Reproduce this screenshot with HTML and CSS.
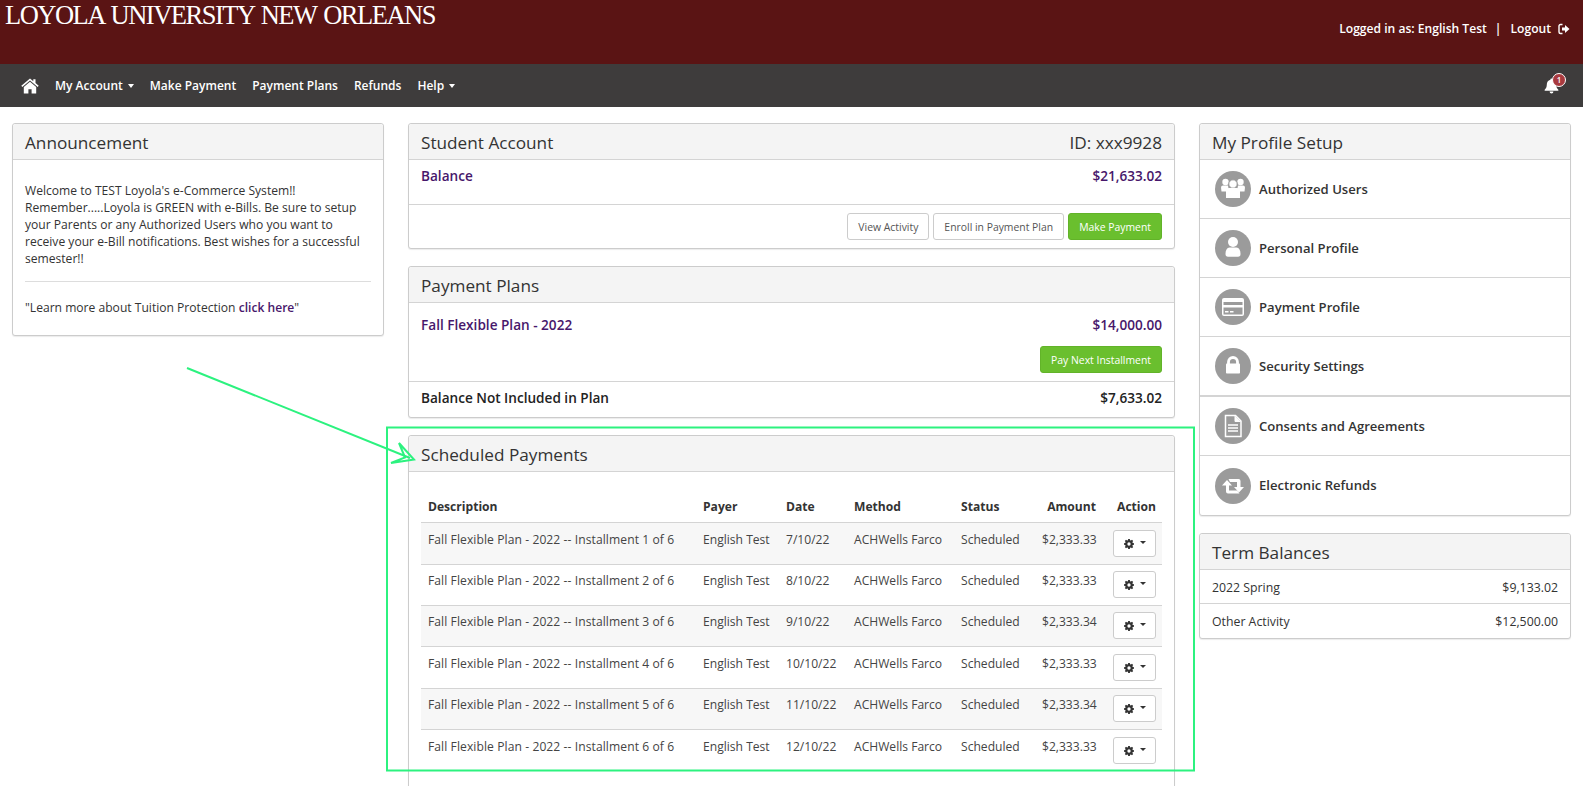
FILE: index.html
```html
<!DOCTYPE html>
<html lang="en">
<head>
    <meta charset="UTF-8">
    <meta name="viewport" content="width=device-width, initial-scale=1.0">
    <title>Loyola University New Orleans</title>
    <link rel="stylesheet" href="styles.css">
</head>
<body>

    <header class="top-bar">
        <div class="logo">LOYOLA UNIVERSITY NEW ORLEANS</div>
        <div class="user-info">
            <span>Logged in as: English Test</span>
            <span class="sep">|</span>
            <a href="#">Logout</a>
            <svg class="logout-icon" viewBox="0 0 12 12"><path d="M4.500 1.500H2.500A1.500 1.500 0 0 0 1 3v6a1.500 1.500 0 0 0 1.500 1.500h2" fill="none" stroke="#fff" stroke-width="1.400"/><path d="M4 4.500h3V2l4.500 4L7 10V7.500H4z" fill="#fff"/></svg>
        </div>
    </header>

    <nav class="nav-bar">
        <a href="#" class="home-link">
            <svg class="home-icon" viewBox="0 0 18 16"><path d="M9 0.500L0.300 7.800l1 1.200L9 2.600 16.700 9l1-1.200L14.500 5.100V1.200h-2.200v2L9 0.500z" fill="#fff"/><path d="M9 3.800L2.800 9v6.500h4.600v-4.300h3.200v4.300h4.600V9z" fill="#fff"/></svg>
        </a>
        <a href="#" class="caret">My Account</a>
        <a href="#">Make Payment</a>
        <a href="#">Payment Plans</a>
        <a href="#">Refunds</a>
        <a href="#" class="caret">Help</a>
        <div class="bell">
            <svg class="bell-icon" viewBox="0 0 16 18"><path d="M8 1.500a1.200 1.200 0 0 1 1.200 1.300C11.800 3.400 13 5.500 13 8c0 3 1 4.300 2.300 5.500v1H0.700v-1C2 12.300 3 11 3 8c0-2.500 1.200-4.600 3.800-5.200A1.200 1.200 0 0 1 8 1.500z" fill="#fff"/><path d="M6 15.500h4a2 2 0 0 1-4 0z" fill="#fff"/></svg>
            <span class="badge">1</span>
        </div>
    </nav>

    <main class="columns">
        <section class="col">
            <div class="card">
                <h2 class="card-title">Announcement</h2>
                <div class="announce">
                    <p>Welcome to TEST Loyola's e-Commerce System!! Remember.....Loyola is GREEN with e-Bills. Be sure to setup your Parents or any Authorized Users who you want to receive your e-Bill notifications. Best wishes for a successful semester!!</p>
                    <hr>
                    <p>"Learn more about Tuition Protection <a href="#">click here</a>"</p>
                </div>
            </div>
        </section>

        <section class="col">
            <div class="card">
                <h2 class="card-title split"><span>Student Account</span><span>ID: xxx9928</span></h2>
                <div class="row balance"><a href="#">Balance</a><a href="#">$21,633.02</a></div>
                <div class="actions">
                    <button class="btn">View Activity</button>
                    <button class="btn">Enroll in Payment Plan</button>
                    <button class="btn btn-green">Make Payment</button>
                </div>
            </div>

            <div class="card">
                <h2 class="card-title">Payment Plans</h2>
                <div class="plan">
                    <div class="row-plain"><a href="#">Fall Flexible Plan - 2022</a><a href="#">$14,000.00</a></div>
                    <div class="plan-action"><button class="btn btn-green">Pay Next Installment</button></div>
                </div>
                <div class="row not-included"><span>Balance Not Included in Plan</span><span>$7,633.02</span></div>
            </div>

            <div class="card card-tall">
                <h2 class="card-title">Scheduled Payments</h2>
                <div class="table-wrap">
                    <table class="pay-table">
                        <colgroup>
                            <col class="c-desc"><col class="c-payer"><col class="c-date"><col class="c-method"><col class="c-status"><col class="c-amount"><col class="c-action">
                        </colgroup>
                        <thead>
                            <tr><th>Description</th><th>Payer</th><th>Date</th><th>Method</th><th>Status</th><th class="num">Amount</th><th class="num act">Action</th></tr>
                        </thead>
                        <tbody>
                            <tr><td>Fall Flexible Plan - 2022 -- Installment 1 of 6</td><td>English Test</td><td>7/10/22</td><td>ACHWells Farco</td><td>Scheduled</td><td class="num">$2,333.33</td><td class="num act"><button class="gear-btn"><svg class="gear" viewBox="0 0 12 12"><use href="#gear-shape"/></svg><i class="gear-caret"></i></button></td></tr>
                            <tr class="short"><td>Fall Flexible Plan - 2022 -- Installment 2 of 6</td><td>English Test</td><td>8/10/22</td><td>ACHWells Farco</td><td>Scheduled</td><td class="num">$2,333.33</td><td class="num act"><button class="gear-btn"><svg class="gear" viewBox="0 0 12 12"><use href="#gear-shape"/></svg><i class="gear-caret"></i></button></td></tr>
                            <tr class="short"><td>Fall Flexible Plan - 2022 -- Installment 3 of 6</td><td>English Test</td><td>9/10/22</td><td>ACHWells Farco</td><td>Scheduled</td><td class="num">$2,333.34</td><td class="num act"><button class="gear-btn"><svg class="gear" viewBox="0 0 12 12"><use href="#gear-shape"/></svg><i class="gear-caret"></i></button></td></tr>
                            <tr><td>Fall Flexible Plan - 2022 -- Installment 4 of 6</td><td>English Test</td><td>10/10/22</td><td>ACHWells Farco</td><td>Scheduled</td><td class="num">$2,333.33</td><td class="num act"><button class="gear-btn"><svg class="gear" viewBox="0 0 12 12"><use href="#gear-shape"/></svg><i class="gear-caret"></i></button></td></tr>
                            <tr class="short"><td>Fall Flexible Plan - 2022 -- Installment 5 of 6</td><td>English Test</td><td>11/10/22</td><td>ACHWells Farco</td><td>Scheduled</td><td class="num">$2,333.34</td><td class="num act"><button class="gear-btn"><svg class="gear" viewBox="0 0 12 12"><use href="#gear-shape"/></svg><i class="gear-caret"></i></button></td></tr>
                            <tr><td>Fall Flexible Plan - 2022 -- Installment 6 of 6</td><td>English Test</td><td>12/10/22</td><td>ACHWells Farco</td><td>Scheduled</td><td class="num">$2,333.33</td><td class="num act"><button class="gear-btn"><svg class="gear" viewBox="0 0 12 12"><use href="#gear-shape"/></svg><i class="gear-caret"></i></button></td></tr>
                        </tbody>
                    </table>
                </div>
            </div>
        </section>

        <section class="col">
            <div class="card">
                <h2 class="card-title">My Profile Setup</h2>
                <a href="#" class="profile-row">
                    <svg class="circle-icon" viewBox="0 0 36 36"><circle cx="18" cy="18" r="18" fill="#9b9b9b"/><g fill="#fff"><circle cx="10.500" cy="11" r="3.200"/><circle cx="25.500" cy="11" r="3.200"/><path d="M6 16.500q0-2 2-2h5l1 6H6.500z"/><path d="M30 16.500q0-2-2-2h-5l-1 6h7.500z"/></g><circle cx="18" cy="13" r="4.200" fill="#fff" stroke="#9b9b9b"/><path d="M11 20q0-3 3-3h8q3 0 3 3v7H11z" fill="#fff"/></svg>
                    <span>Authorized Users</span>
                </a>
                <a href="#" class="profile-row">
                    <svg class="circle-icon" viewBox="0 0 36 36"><circle cx="18" cy="18" r="18" fill="#9b9b9b"/><circle cx="18" cy="12" r="5" fill="#fff"/><path d="M10.500 24q0-6 4-6.500h7q4 .500 4 6.500 0 2.700-2.500 2.700h-10Q10.500 26.700 10.500 24z" fill="#fff"/></svg>
                    <span>Personal Profile</span>
                </a>
                <a href="#" class="profile-row">
                    <svg class="circle-icon" viewBox="0 0 36 36"><circle cx="18" cy="18" r="18" fill="#9b9b9b"/><rect x="7" y="9" width="22" height="18" rx="2" fill="#fff"/><rect x="8.500" y="13" width="19" height="3" fill="#9b9b9b"/><rect x="8.500" y="18.500" width="19" height="7" fill="#9b9b9b"/><rect x="10" y="22" width="3.500" height="1.500" fill="#fff"/><rect x="15" y="22" width="3.500" height="1.500" fill="#fff"/></svg>
                    <span>Payment Profile</span>
                </a>
                <a href="#" class="profile-row row-last-thick">
                    <svg class="circle-icon" viewBox="0 0 36 36"><circle cx="18" cy="18" r="18" fill="#9b9b9b"/><path d="M13.500 16v-2a4.500 4.500 0 0 1 9 0v2" fill="none" stroke="#fff" stroke-width="2.800"/><rect x="11" y="15.500" width="14" height="10" rx="0.800" fill="#fff"/></svg>
                    <span>Security Settings</span>
                </a>
                <a href="#" class="profile-row">
                    <svg class="circle-icon" viewBox="0 0 36 36"><circle cx="18" cy="18" r="18" fill="#9b9b9b"/><path d="M10.500 7.500h10l5.500 5.500v15.500H10.500z" fill="none" stroke="#fff" stroke-width="1.500"/><path d="M20 8v5.500h5.500" fill="#fff" stroke="#fff"/><path d="M13 17h10M13 20h10M13 23h10" stroke="#fff" stroke-width="1.500"/></svg>
                    <span>Consents and Agreements</span>
                </a>
                <a href="#" class="profile-row row-end">
                    <svg class="circle-icon" viewBox="0 0 36 36"><circle cx="18" cy="18" r="18" fill="#9b9b9b"/><path d="M7 17.500l5-5.500 5 5.500h-3v5h8l2.500 3H13q-2 0-2-2v-6zM13.500 11h10q2 0 2 2v6h3.500l-5 5.500-5-5.500h3v-5h-7z" fill="#fff"/></svg>
                    <span>Electronic Refunds</span>
                </a>
            </div>

            <div class="card">
                <h2 class="card-title">Term Balances</h2>
                <div class="term"><span>2022 Spring</span><span>$9,133.02</span></div>
                <div class="term"><span>Other Activity</span><span>$12,500.00</span></div>
            </div>
        </section>
    </main>

    <!-- Annotation drawn on top of the screenshot -->
    <svg class="annotation" viewBox="0 0 1583 786">
        <rect x="387" y="427.500" width="807" height="343" fill="none" stroke="#2cf27f" stroke-width="2"/>
        <path d="M187 368L410 458" fill="none" stroke="#2cf27f" stroke-width="2"/>
        <path d="M399 443L414 459.500 391 463 405 457.500z" fill="none" stroke="#2cf27f" stroke-width="2"/>
    </svg>

    <svg width="0" height="0" class="defs">
        <defs>
            <path id="gear-shape" d="M5 0h2l.3 1.500 1 .4L9.600 1 11 2.400 10.100 3.700l.4 1L12 5v2l-1.500.3-.4 1 .9 1.300L9.600 11 8.300 10.100l-1 .4L7 12H5l-.3-1.500-1-.4L2.400 11 1 9.600 1.900 8.300l-.4-1L0 7V5l1.500-.3.4-1L1 2.400 2.400 1l1.300.9 1-.4zM6 4a2 2 0 1 0 0 4 2 2 0 0 0 0-4z" fill="#333" fill-rule="evenodd"/>
        </defs>
    </svg>

</body>
</html>
```

FILE: styles.css
```css
html, body {
    height: 100%;
    overflow: hidden;
}

body {
    margin: 0;
    position: relative;
    background-color: #fff;
    color: #333;
    font-family: "Open Sans", "Noto Sans", Arial, sans-serif;
    font-size: 12.1px;
}

a {
    text-decoration: none;
    color: inherit;
}

.defs {
    position: absolute;
}

/* Top bars */
.top-bar {
    height: 64px;
    background-color: #5a1414;
    color: #fff;
    display: flex;
    justify-content: space-between;
}

.logo {
    font-family: "Liberation Serif", serif;
    font-size: 26.5px;
    line-height: 30px;
    padding-left: 5px;
    letter-spacing: -1.5px;
    word-spacing: 2px;
}

.user-info {
    display: flex;
    align-items: center;
    height: 57px;
    padding-right: 13px;
    font-size: 12.1px;
    font-weight: 600;
}

.sep {
    margin: 0 9px 0 8px;
}

.logout-icon {
    width: 12px;
    height: 12px;
    margin-left: 7px;
}

.nav-bar {
    height: 43px;
    background-color: #3e3c3c;
    color: #fff;
    display: flex;
    align-items: center;
    gap: 16px;
    padding: 0 21px;
    font-size: 12px;
    font-weight: 600;
}

.home-link {
    display: flex;
}

.home-icon {
    width: 18px;
    height: 16px;
}

.caret::after {
    content: "";
    display: inline-block;
    margin-left: 5px;
    vertical-align: 2px;
    border-top: 4px solid #fff;
    border-left: 3.500px solid transparent;
    border-right: 3.500px solid transparent;
}

.bell {
    margin-left: auto;
    position: relative;
    width: 15px;
    height: 17px;
    margin-right: 3px;
}

.bell-icon {
    width: 15px;
    height: 17px;
    display: block;
}

.badge {
    position: absolute;
    top: -4px;
    right: -7px;
    width: 12px;
    height: 12px;
    border-radius: 50%;
    background-color: #a83a3f;
    border: 1px solid #fff;
    color: #fff;
    font-size: 8px;
    line-height: 12px;
    text-align: center;
}

/* Page grid */
.columns {
    display: grid;
    grid-template-columns: 372px 1fr 372px;
    gap: 24px;
    padding: 16px 12px 0;
}

.col {
    display: flex;
    flex-direction: column;
    gap: 17px;
    align-items: stretch;
}

.card {
    background-color: #fff;
    border: 1px solid #ccc;
    border-radius: 3px;
    box-shadow: 0 1px 1px rgba(0, 0, 0, 0.08);
}

.card-tall {
    height: 420px;
}

.card-title {
    margin: 0;
    height: 36px;
    box-sizing: border-box;
    padding: 1px 12px 0;
    display: flex;
    align-items: center;
    background-color: #f4f4f4;
    border-bottom: 1px solid #d4d4d4;
    border-radius: 3px 3px 0 0;
    color: #333;
    font-size: 17.2px;
    font-weight: 500;
}

.split {
    justify-content: space-between;
}

/* Announcement */
.announce {
    padding: 22px 12px 19px;
    line-height: 17px;
}

.announce p {
    margin: 0;
}

.announce hr {
    border: 0;
    border-top: 1px solid #ddd;
    margin: 14px 0 17px;
}

.announce a {
    color: #47176b;
    font-weight: 600;
}

/* Student account */
.row {
    display: flex;
    justify-content: space-between;
    padding: 0 12px;
}

.balance {
    height: 45px;
    padding-top: 6px;
    box-sizing: border-box;
    border-bottom: 1px solid #d4d4d4;
    color: #47176b;
    font-size: 13.6px;
    font-weight: 550;
}

.actions {
    display: flex;
    justify-content: flex-end;
    gap: 4px;
    padding: 8px 12px;
}

.btn {
    height: 27px;
    padding: 0 10px;
    background-color: #fff;
    border: 1px solid #ccc;
    border-radius: 3px;
    color: #555;
    font-family: inherit;
    font-size: 10.4px;
    cursor: pointer;
}

.btn-green {
    background-color: #6abf2e;
    border-color: #62b329;
    color: #fff;
    font-weight: 500;
}

/* Payment plans */
.plan {
    padding: 12px 12px 8px;
    border-bottom: 1px solid #d4d4d4;
}

.row-plain {
    display: flex;
    justify-content: space-between;
    color: #47176b;
    font-size: 13.6px;
    font-weight: 550;
}

.plan-action {
    display: flex;
    justify-content: flex-end;
    margin-top: 12px;
}

.not-included {
    height: 35px;
    box-sizing: border-box;
    padding-bottom: 4px;
    align-items: center;
    color: #222;
    font-size: 13.6px;
    font-weight: 550;
}

/* Scheduled payments */
.table-wrap {
    padding: 18px 12px 0;
}

.pay-table {
    width: 100%;
    table-layout: fixed;
    border-collapse: collapse;
    font-size: 12.1px;
}

.c-desc { width: 275px; }
.c-payer { width: 83px; }
.c-date { width: 68px; }
.c-method { width: 107px; }
.c-status { width: 81px; }
.c-amount { width: 68px; }
.c-action { width: 59px; }

.pay-table th {
    height: 32px;
    padding: 0 7px;
    text-align: left;
    color: #333;
    font-size: 12.1px;
    font-weight: 700;
    border-bottom: 1px solid #d4d4d4;
}

.pay-table td {
    height: 42px;
    box-sizing: border-box;
    padding: 8px 7px 0;
    vertical-align: top;
    white-space: nowrap;
    color: #444;
    border-bottom: 1px solid #d4d4d4;
}

.pay-table td:first-child {
    letter-spacing: 0.08px;
}

.pay-table tr.short td {
    height: 41px;
    padding-top: 7px;
}

.pay-table tbody tr:nth-child(odd) td {
    background-color: #f7f7f7;
}

.pay-table tbody tr:last-child td {
    border-bottom: 0;
}

.pay-table .num {
    text-align: right;
}

.pay-table .act {
    padding-right: 6px;
}

.pay-table td.act {
    padding-top: 7px;
}

.pay-table tr.short td.act {
    padding-top: 6px;
}

.gear-btn {
    width: 43px;
    height: 27px;
    background-color: #fff;
    border: 1px solid #ccc;
    border-radius: 3px;
    padding: 0;
    display: inline-flex;
    align-items: center;
    justify-content: center;
    gap: 6px;
    vertical-align: top;
}

.gear {
    width: 10px;
    height: 10px;
}

.gear-caret {
    border-top: 3px solid #333;
    border-left: 3px solid transparent;
    border-right: 3px solid transparent;
    margin-top: -2px;
}

/* Profile links */
.profile-row {
    display: flex;
    align-items: center;
    gap: 8px;
    height: 59px;
    box-sizing: border-box;
    padding-left: 15px;
    border-bottom: 1px solid #d4d4d4;
    color: #333;
    font-size: 13.1px;
    font-weight: 550;
}

.profile-row span {
    margin-bottom: 1px;
}

.row-last-thick {
    height: 60px;
    border-bottom: 2px solid #d4d4d4;
}

.row-end {
    border-bottom: 0;
}

.circle-icon {
    width: 36px;
    height: 36px;
    flex: none;
}

.term {
    display: flex;
    justify-content: space-between;
    align-items: center;
    height: 34px;
    box-sizing: border-box;
    padding: 2px 12px 0;
    border-bottom: 1px solid #d4d4d4;
    font-size: 12.3px;
}

.term:last-child {
    padding-top: 1px;
    border-bottom: 0;
}

.annotation {
    position: absolute;
    top: 0;
    left: 0;
    width: 1583px;
    height: 786px;
    pointer-events: none;
}
```
